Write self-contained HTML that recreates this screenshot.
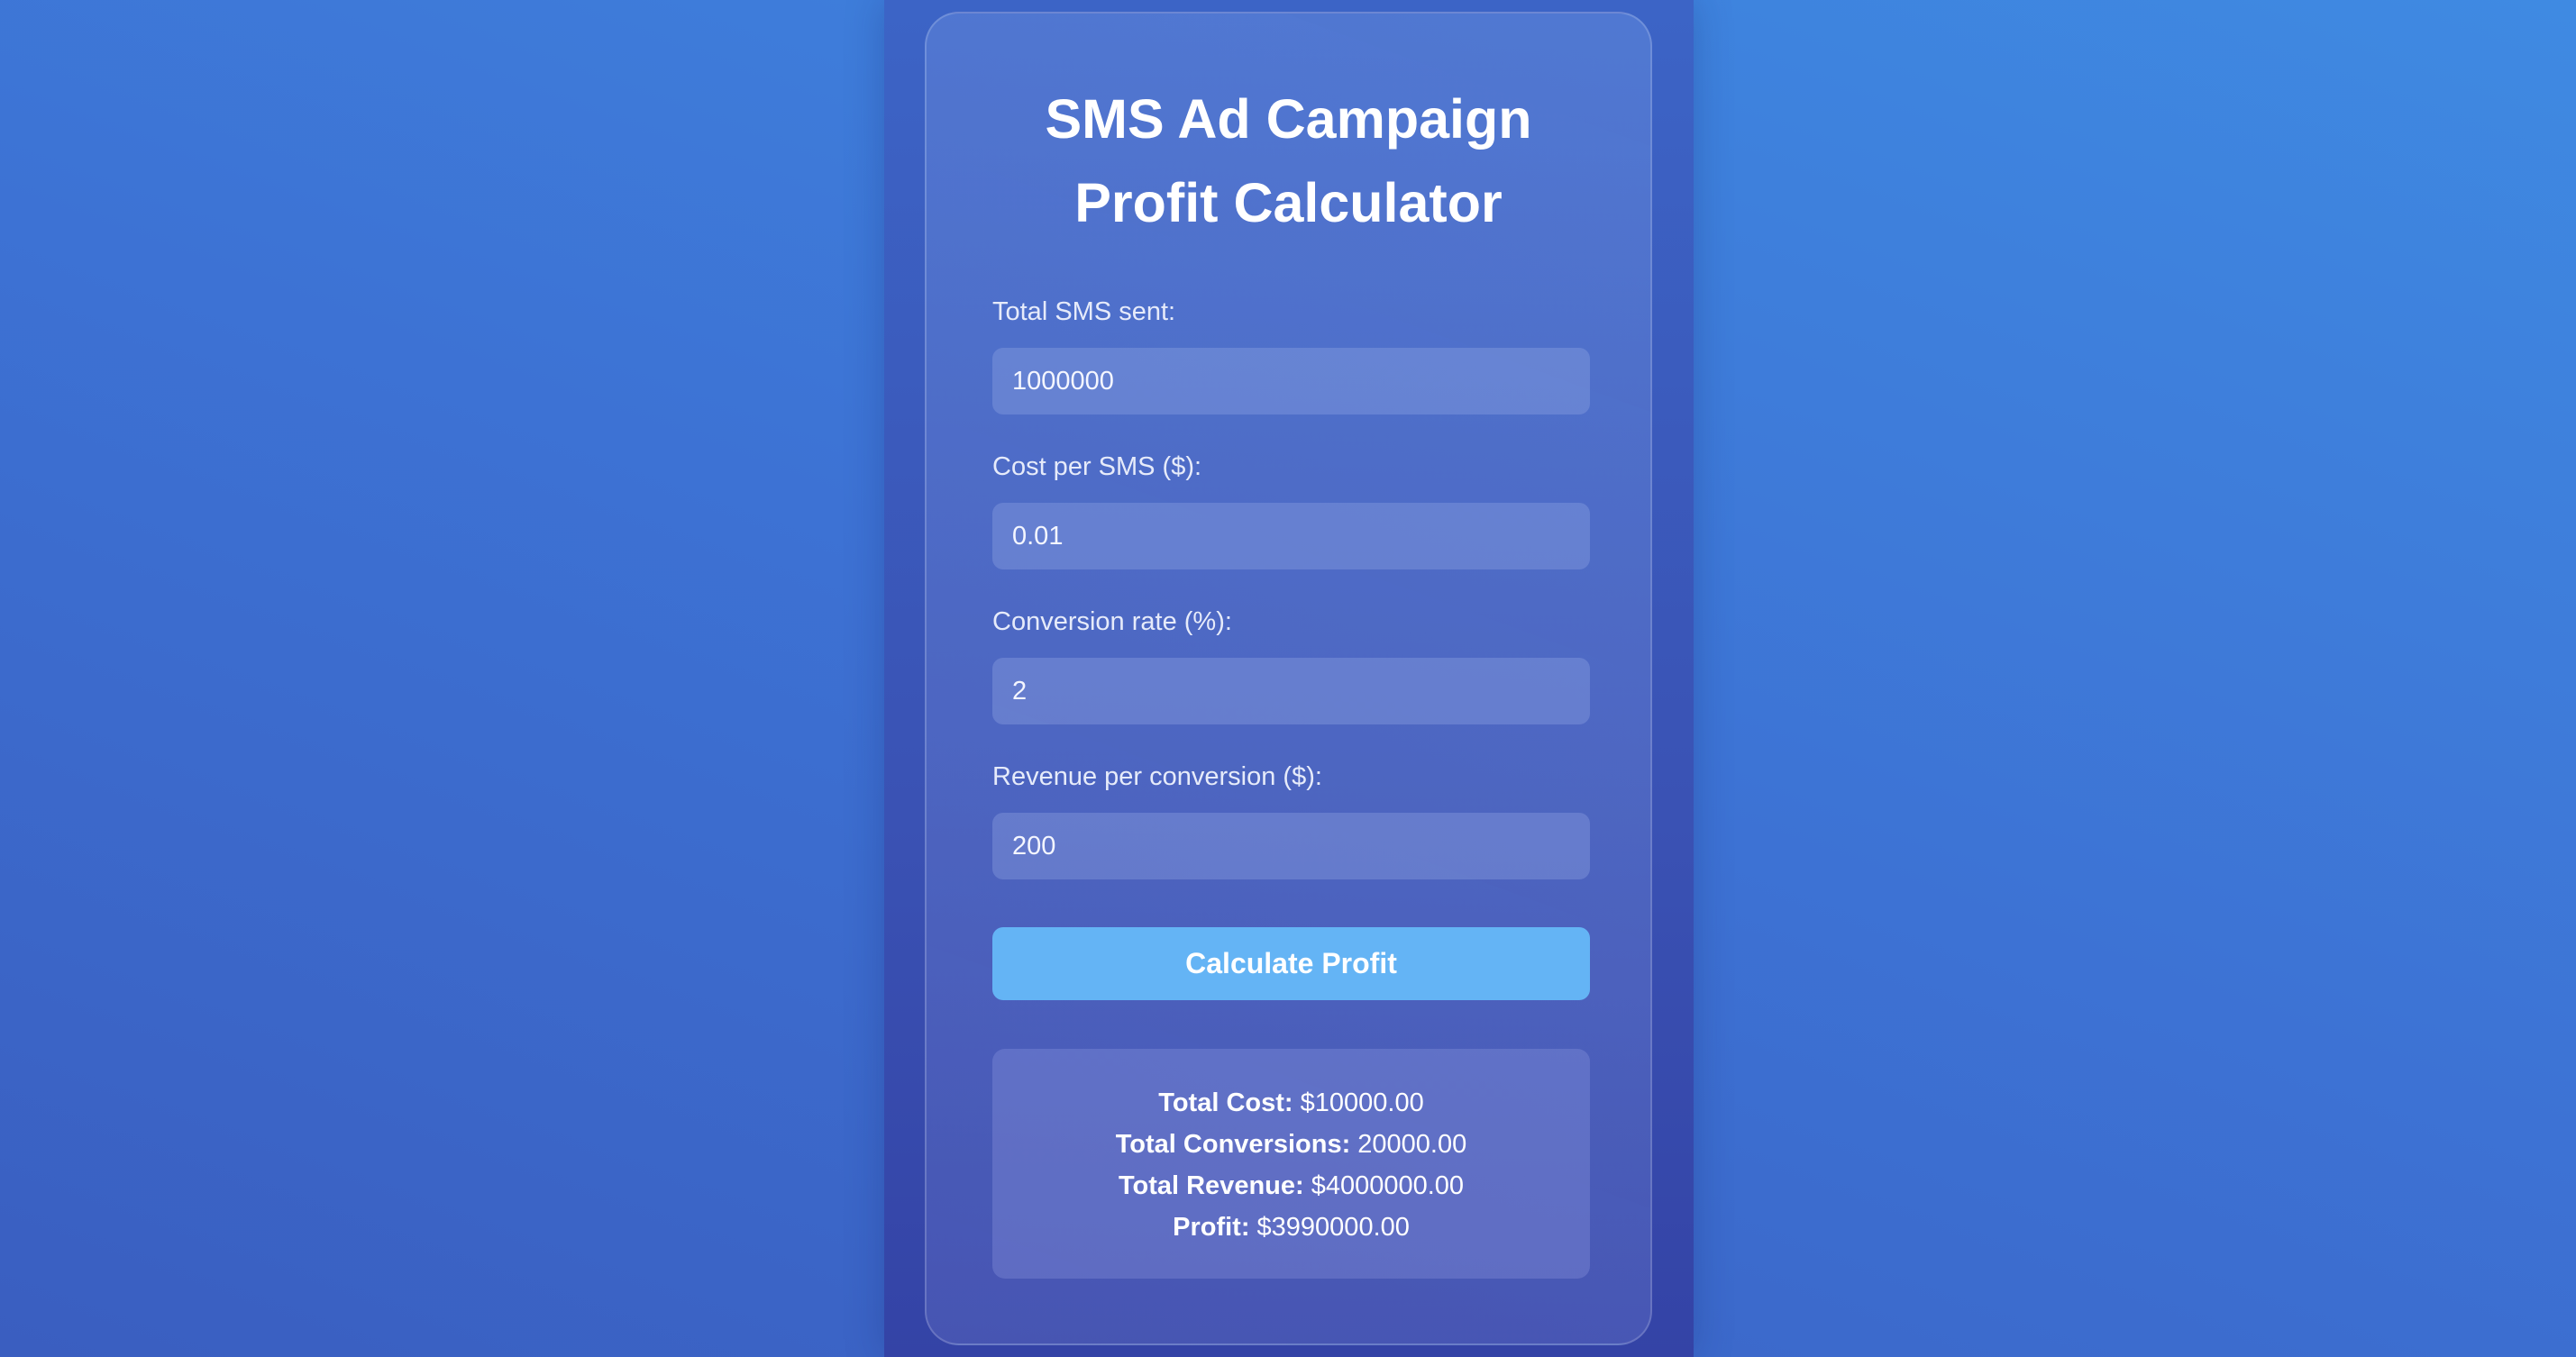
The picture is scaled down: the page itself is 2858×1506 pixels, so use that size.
<!DOCTYPE html>
<html><head><meta charset="utf-8"><style>
html,body{margin:0;padding:0;width:2858px;height:1506px;overflow:hidden}
body{background:linear-gradient(20deg,#3a5ec0 0%,#3d72d4 50%,#3f8ae2 100%);font-family:"Liberation Sans",sans-serif;color:#fff;position:relative}
.col{position:absolute;left:981px;top:0;width:898px;height:1506px;background:linear-gradient(180deg,#3c64c6 0%,#3a52b4 60%,#3443a6 100%);box-shadow:0 0 40px rgba(20,30,100,.25)}
.card{position:absolute;left:1026px;top:13px;width:807px;height:1480px;box-sizing:border-box;border:2px solid rgba(255,255,255,.18);border-radius:38px;background:linear-gradient(20deg,rgba(120,130,210,.28),rgba(130,170,240,.3))}
h1{position:absolute;left:0;right:0;top:71px;margin:0;text-align:center;font-size:61px;line-height:93px;font-weight:bold}
.lbl{position:absolute;left:73px;font-size:29px;font-weight:300;color:#e6ebfa}
.inp{position:absolute;left:73px;width:663px;height:74px;border-radius:12px;background:rgba(150,170,230,.35);font-size:29px;line-height:74px;padding-left:22px;box-sizing:border-box;color:#f4f6ff}
.btn{position:absolute;left:73px;top:1014px;width:663px;height:81px;border-radius:12px;background:#64b4f5;text-align:center;line-height:81px;font-size:32px;font-weight:bold}
.res{position:absolute;left:73px;top:1149px;width:663px;height:255px;border-radius:14px;background:rgba(150,160,230,.3);text-align:center;font-size:29px;padding-top:37px;box-sizing:border-box;line-height:46px}
</style></head><body>
<div class="col"></div>
<div class="card">
<h1>SMS Ad Campaign<br>Profit Calculator</h1>
<div class="lbl" style="top:315px">Total SMS sent:</div>
<div class="inp" style="top:371px">1000000</div>
<div class="lbl" style="top:487px">Cost per SMS ($):</div>
<div class="inp" style="top:543px">0.01</div>
<div class="lbl" style="top:659px">Conversion rate (%):</div>
<div class="inp" style="top:715px">2</div>
<div class="lbl" style="top:831px">Revenue per conversion ($):</div>
<div class="inp" style="top:887px">200</div>
<div class="btn">Calculate Profit</div>
<div class="res"><b>Total Cost:</b> $10000.00<br><b>Total Conversions:</b> 20000.00<br><b>Total Revenue:</b> $4000000.00<br><b>Profit:</b> $3990000.00</div>
</div>
</body></html>
